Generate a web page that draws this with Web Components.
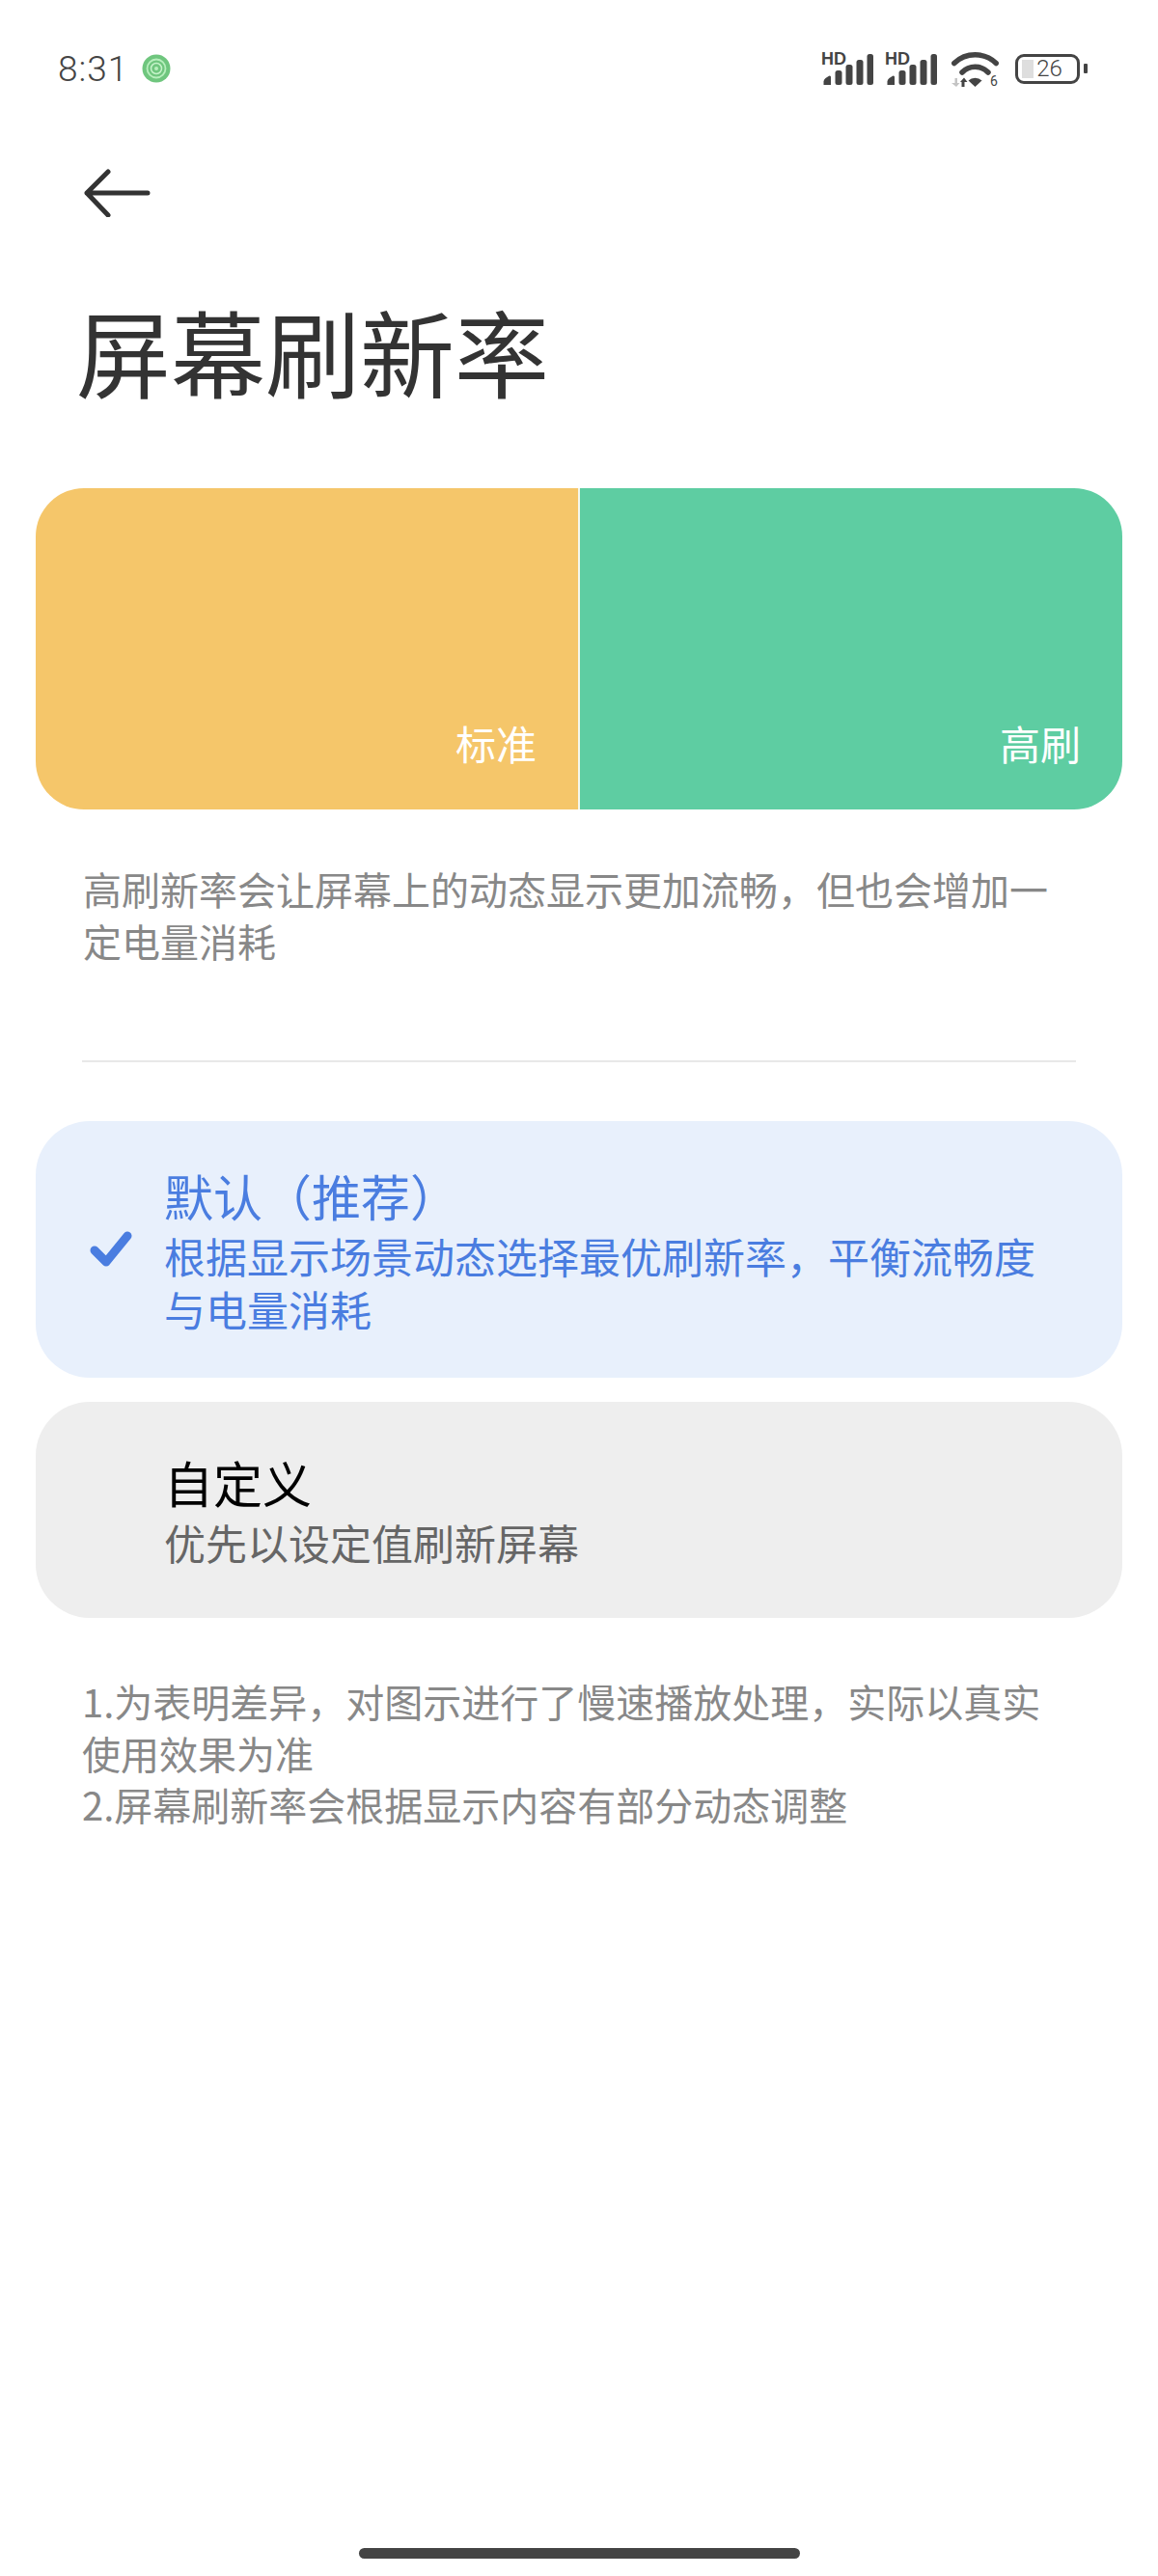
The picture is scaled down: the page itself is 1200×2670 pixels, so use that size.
<!DOCTYPE html>
<html lang="zh-CN">
<head>
<meta charset="utf-8">
<title>屏幕刷新率</title>
<style>
  html, body { margin: 0; background: #fff; }
  body { font-family: "Noto Sans CJK SC", "Noto Sans", sans-serif; }
</style>
</head>
<body>
<refresh-screen>
  <status-bar></status-bar>
  <page-header>屏幕刷新率</page-header>
  <refresh-preview></refresh-preview>
  <info-text class="desc">高刷新率会让屏幕上的动态显示更加流畅&#xFF0C;但也会增加一定电量消耗</info-text>
  <section-line></section-line>
  <option-card selected>
    <span slot="title">默认&#xFF08;推荐&#xFF09;</span>
    根据显示场景动态选择最优刷新率&#xFF0C;平衡流畅度与电量消耗
  </option-card>
  <option-card>
    <span slot="title">自定义</span>
    优先以设定值刷新屏幕
  </option-card>
  <info-text class="note">1.为表明差异&#xFF0C;对图示进行了慢速播放处理&#xFF0C;实际以真实使用效果为准<br>2.屏幕刷新率会根据显示内容有部分动态调整</info-text>
  <home-indicator></home-indicator>
</refresh-screen>

<script>
const CJK = '"Noto Sans CJK SC", "Noto Sans", sans-serif';

class RefreshScreen extends HTMLElement {
  connectedCallback() {
    this.attachShadow({ mode: 'open' });
    this.shadowRoot.innerHTML = `
      <style>
        :host {
          display: flex;
          flex-direction: column;
          height: 2670px;
          background: #fff;
          overflow: hidden;
        }
        ::slotted(.desc) { margin-top: 56px; }
        ::slotted(.note) { margin-top: 35px; margin-left: 85px; }
      </style>
      <slot></slot>
    `;
  }
}

const signalIcon = `
  <svg width="54" height="46" viewBox="0 -6 54 46" fill="#444">
    <text x="0" y="13" font-family="Liberation Sans, sans-serif" font-size="18" font-weight="700" textLength="26">HD</text>
    <path d="M2.500 34v-3.500q0-2 2-3.500l3.500-2.300q2-.8 2 1.300v8z"/>
    <rect x="14.500" y="19" width="7" height="15" rx="2.500"/>
    <rect x="25.500" y="13" width="7" height="21" rx="2.500"/>
    <rect x="36.500" y="8" width="7" height="26" rx="2.500"/>
    <rect x="47.500" y="2" width="6.500" height="32" rx="2.500"/>
  </svg>`;

class StatusBar extends HTMLElement {
  connectedCallback() {
    this.attachShadow({ mode: 'open' });
    this.shadowRoot.innerHTML = `
      <style>
        :host {
          display: flex;
          align-items: center;
          height: 142px;
          padding: 0 73px 0 60px;
          color: #444;
          font-family: Roboto, "Liberation Sans", sans-serif;
        }
        .time { font-size: 37px; font-weight: 300; letter-spacing: 1px; }
        .app { margin-left: 14px; display: block; }
        .right { margin-left: auto; display: flex; align-items: center; }
        .right svg { display: block; }
        .sig2 { margin-left: 12px; }
        .wifi { margin-left: 15px; }
        .battery {
          position: relative;
          margin-left: 17px;
          box-sizing: border-box;
          width: 67px;
          height: 31px;
          border: 3.500px solid #444;
          border-radius: 9px;
          display: flex;
          align-items: center;
          justify-content: center;
          font-size: 24px;
          font-weight: 300;
          line-height: 1;
        }
        .battery::before {
          content: '';
          position: absolute;
          left: 4px;
          top: 3px;
          width: 12px;
          height: 19px;
          background: #dedede;
        }
        .battery span { position: relative; padding-left: 4px; }
        .nub { width: 4px; height: 10px; margin-left: 4px; background: #444; border-radius: 1px; }
      </style>
      <span class="time">8:31</span>
      <svg class="app" width="30" height="30" viewBox="0 0 30 30">
        <circle cx="15" cy="15" r="14.500" fill="#6fc67e"/>
        <circle cx="15" cy="15" r="9.500" fill="none" stroke="#b8efbd" stroke-width="1.800"/>
        <circle cx="15" cy="15" r="5.500" fill="none" stroke="#c6f3ca" stroke-width="1.500"/>
        <circle cx="15" cy="15" r="2" fill="#b8efbd"/>
      </svg>
      <div class="right">
        ${signalIcon}
        <div class="sig2">${signalIcon}</div>
        <svg class="wifi" width="49" height="49" viewBox="0 -6 49 49">
          <g fill="none" stroke="#444" stroke-width="5.500" stroke-linecap="round">
            <path d="M2.800 12.500A31.500 31.500 0 0 1 46.200 12.500"/>
            <path d="M11 22A18.700 18.700 0 0 1 38 22"/>
          </g>
          <path d="M24.500 37L17.500 30.500A10 10 0 0 1 31.500 30.500Z" fill="#444"/>
          <path d="M3.500 28h2.500v5h2.500l-3.500 4L0 33h3.500z" fill="#c4c4c4"/>
          <path d="M10.500 37v-5H9l4-4.500 3.500 4.500H13.500v5z" fill="#444"/>
          <text x="40" y="36" font-family="Roboto, sans-serif" font-size="14" fill="#444">6</text>
        </svg>
        <div class="battery"><span>26</span></div>
        <div class="nub"></div>
      </div>
    `;
  }
}

class PageHeader extends HTMLElement {
  connectedCallback() {
    this.attachShadow({ mode: 'open' });
    this.shadowRoot.innerHTML = `
      <style>
        :host {
          display: block;
          padding: 33px 0 0 86px;
          color: #333;
          font-family: ${CJK};
        }
        svg { display: block; }
        h1 {
          margin: 89px 0 0 -7px;
          font-size: 98px;
          font-weight: 400;
          line-height: 96px;
        }
      </style>
      <svg width="70" height="50" viewBox="0 0 70 50" fill="none" stroke="#333" stroke-width="5" stroke-linecap="round" stroke-linejoin="round">
        <path d="M26 3L4 25l22 23M4 25h63"/>
      </svg>
      <h1><slot></slot></h1>
    `;
  }
}

class RefreshPreview extends HTMLElement {
  connectedCallback() {
    this.attachShadow({ mode: 'open' });
    this.shadowRoot.innerHTML = `
      <style>
        :host {
          display: flex;
          height: 333px;
          margin: 96px 37px 0;
          border-radius: 50px;
          overflow: hidden;
          color: #fff;
          font-family: ${CJK};
          font-size: 42px;
          line-height: 42px;
        }
        div {
          flex: 1 1 0;
          display: flex;
          align-items: flex-end;
          justify-content: flex-end;
          padding: 0 43px 48px 0;
        }
        .std { background: #f5c66a; }
        .high { background: #5ecda2; border-left: 2px solid #f4f7ec; }
      </style>
      <div class="std">标准</div>
      <div class="high">高刷</div>
    `;
  }
}

class InfoText extends HTMLElement {
  connectedCallback() {
    this.attachShadow({ mode: 'open' });
    this.shadowRoot.innerHTML = `
      <style>
        :host {
          display: block;
          width: 1010px;
          margin-left: 86px;
          color: #888;
          font-family: ${CJK};
          font-size: 40px;
          line-height: 53.500px;
        }
      </style>
      <slot></slot>
    `;
  }
}

class SectionLine extends HTMLElement {
  connectedCallback() {
    this.attachShadow({ mode: 'open' });
    this.shadowRoot.innerHTML = `
      <style>
        :host {
          display: block;
          height: 2px;
          margin: 97px 85px 61px;
          background: #e8e8e8;
        }
      </style>
    `;
  }
}

class OptionCard extends HTMLElement {
  connectedCallback() {
    this.attachShadow({ mode: 'open' });
    const check = this.hasAttribute('selected')
      ? `<svg width="44" height="37" viewBox="0 0 44 37" fill="none" stroke="currentColor" stroke-width="9" stroke-linecap="round" stroke-linejoin="round"><path d="M5 20l12 12L39 5"/></svg>`
      : '';
    this.shadowRoot.innerHTML = `
      <style>
        :host {
          display: grid;
          grid-template-columns: 133px 925px;
          align-items: center;
          margin: 0 37px 25px;
          padding: 49px 0 51px;
          border-radius: 56px;
          background: #eee;
          color: #666;
          font-family: ${CJK};
          font-size: 43px;
          line-height: 55px;
        }
        :host([selected]) {
          padding: 43px 0 44px;
          background: #e8f0fc;
          color: #4a7de0;
        }
        .mark { display: flex; padding-left: 56px; }
        .title {
          font-size: 51px;
          line-height: 69px;
          color: #000;
        }
        :host([selected]) .title { color: #4a7de0; }
      </style>
      <div class="mark">${check}</div>
      <div>
        <div class="title"><slot name="title"></slot></div>
        <div><slot></slot></div>
      </div>
    `;
  }
}

class HomeIndicator extends HTMLElement {
  connectedCallback() {
    this.attachShadow({ mode: 'open' });
    this.shadowRoot.innerHTML = `
      <style>
        :host {
          display: block;
          width: 457px;
          height: 11px;
          margin: auto auto 18px;
          border-radius: 6px;
          background: #444;
        }
      </style>
    `;
  }
}

customElements.define('refresh-screen', RefreshScreen);
customElements.define('status-bar', StatusBar);
customElements.define('page-header', PageHeader);
customElements.define('refresh-preview', RefreshPreview);
customElements.define('info-text', InfoText);
customElements.define('section-line', SectionLine);
customElements.define('option-card', OptionCard);
customElements.define('home-indicator', HomeIndicator);
</script>
</body>
</html>
